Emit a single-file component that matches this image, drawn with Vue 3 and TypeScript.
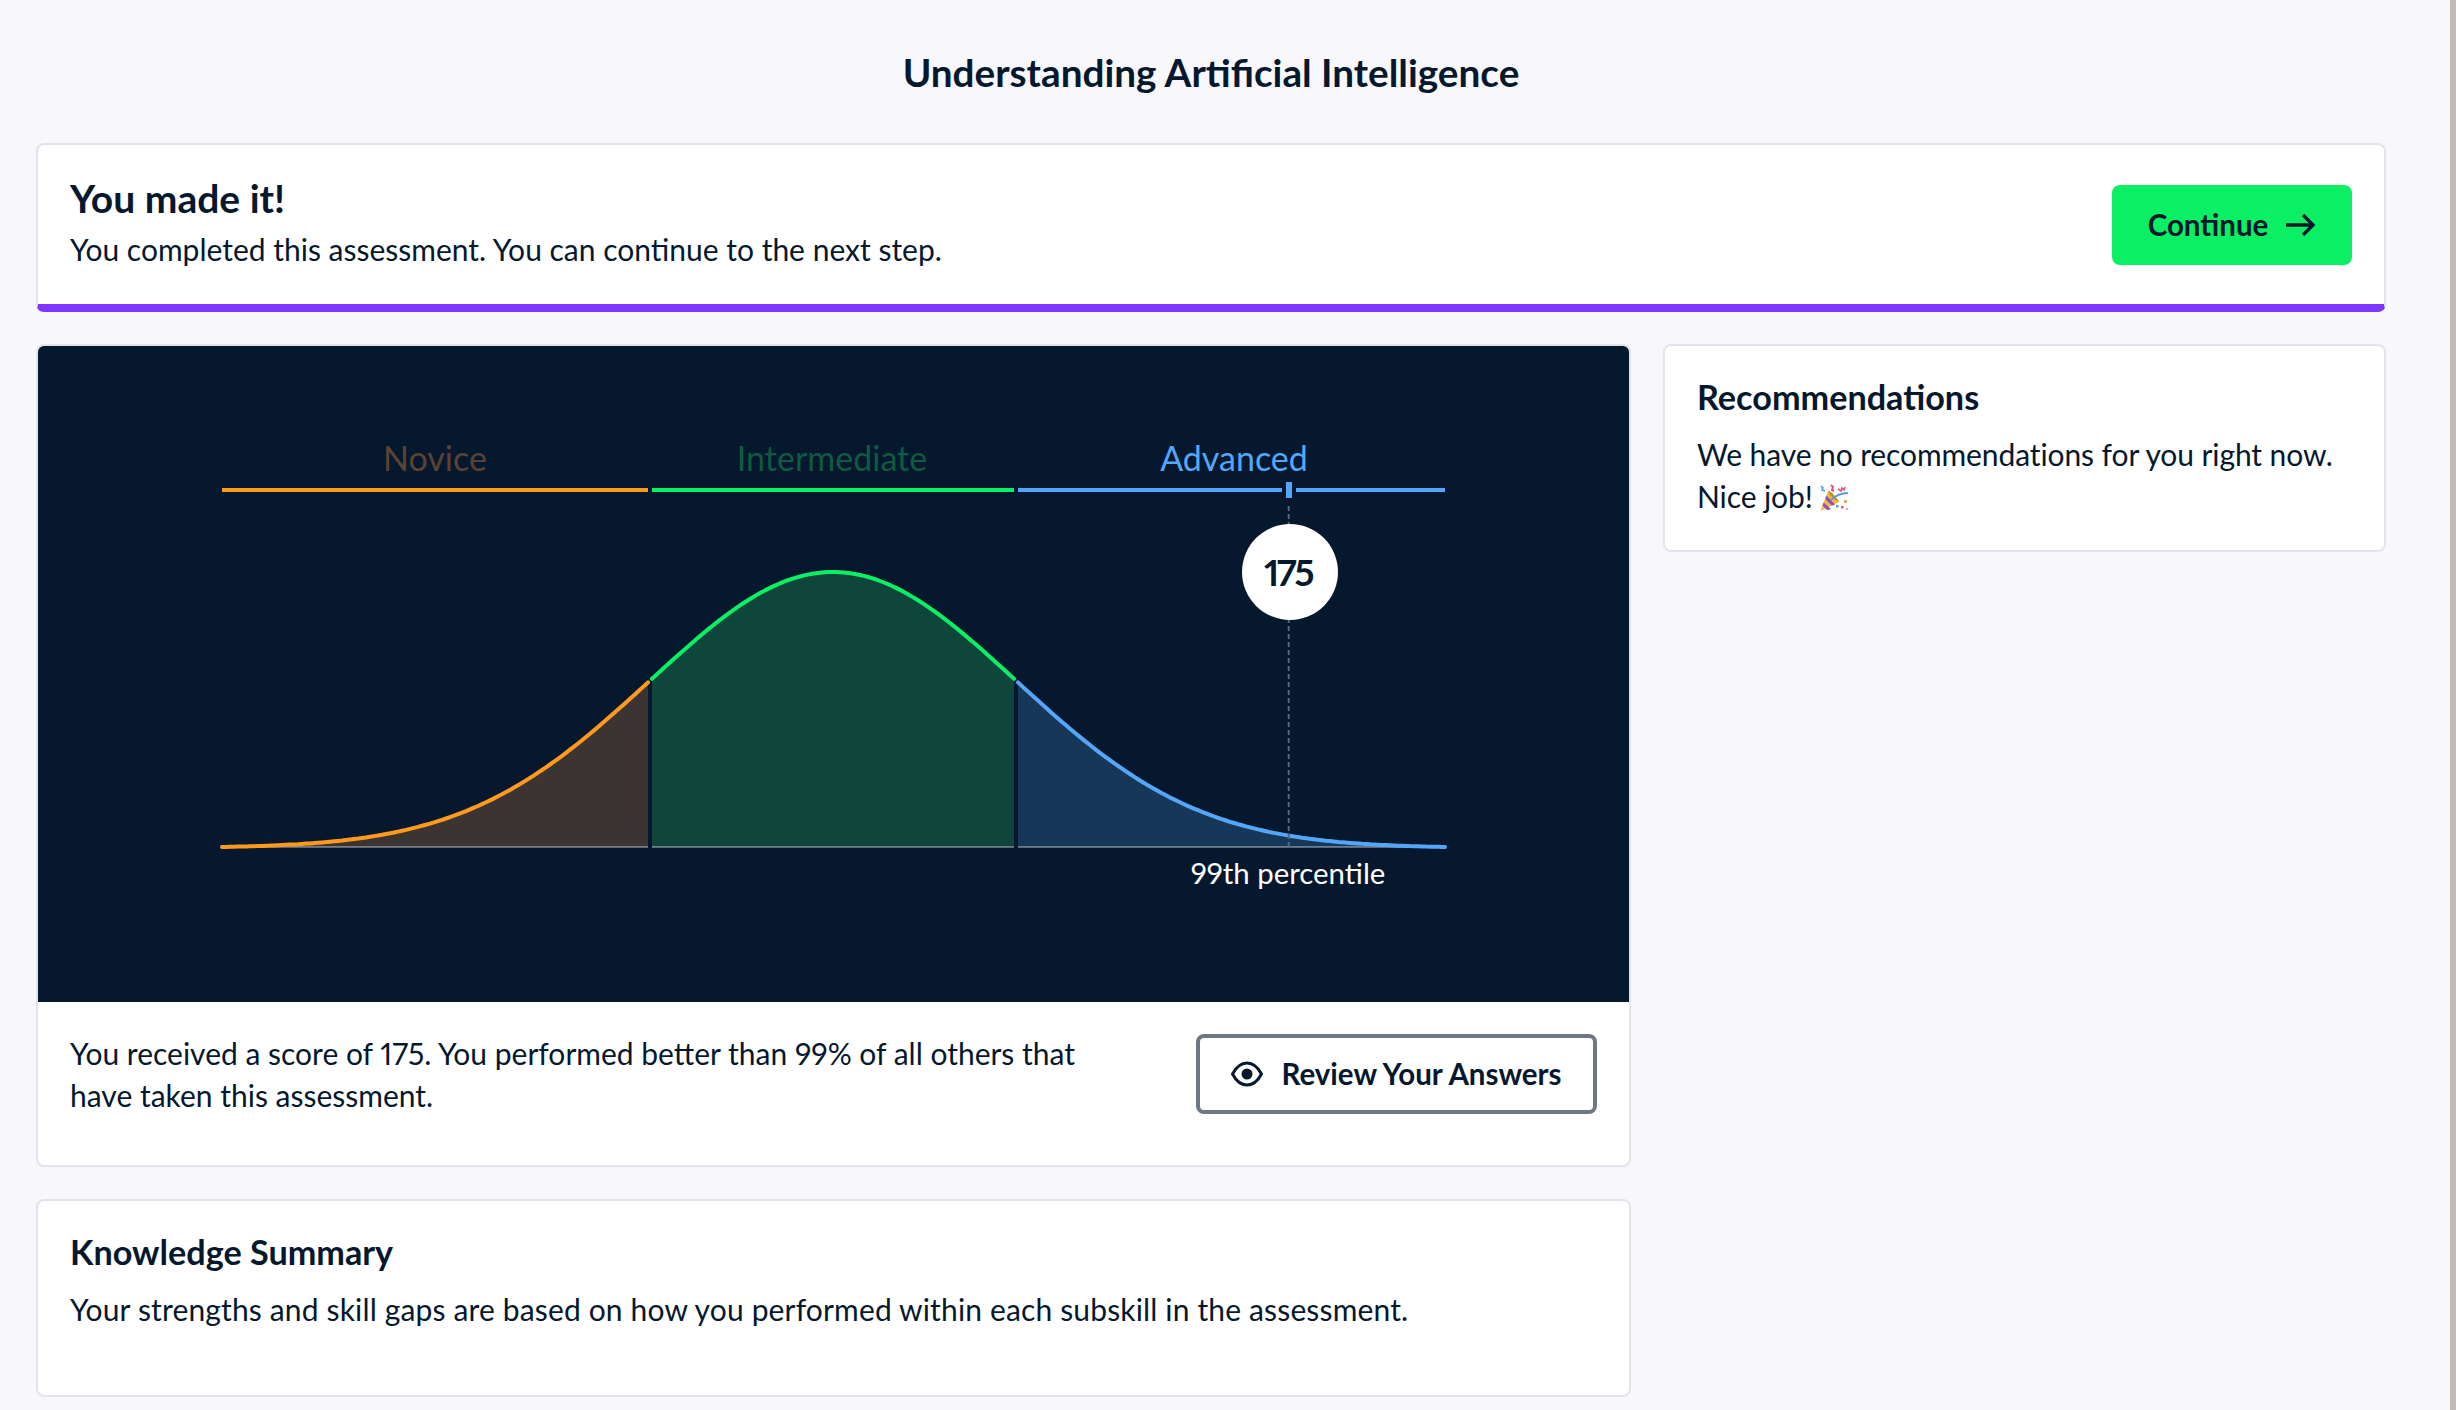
<script setup lang="ts">
interface Band {
  name: string
  from: number
  to: number
  line: string
  fill: string
  label: string
  labelX: number
}

const bands: Band[] = [
  { name: 'Novice', from: 222, to: 648, line: '#ff9a1f', fill: '#3c3333', label: '#5a4334', labelX: 435 },
  { name: 'Intermediate', from: 652, to: 1014, line: '#0aef63', fill: '#0e463b', label: '#0f5a40', labelX: 832 },
  { name: 'Advanced', from: 1018, to: 1445, line: '#54a7f8', fill: '#173759', label: '#54a7f8', labelX: 1234 }
]

const baseY = 848
const peak = 276

function curveY(x: number): number {
  const d = (x - 833) / 183
  return baseY - peak * Math.exp(-0.5 * d * d)
}

function curvePoints(b: Band): string {
  const pts: string[] = []
  for (let x = b.from; x < b.to; x += 4) pts.push(`${x},${curveY(x).toFixed(1)}`)
  pts.push(`${b.to},${curveY(b.to).toFixed(1)}`)
  return pts.join(' ')
}

function areaPoints(b: Band): string {
  return `${b.from},847 ${curvePoints(b)} ${b.to},847`
}
</script>

<template>
  <div class="page">
    <main class="content">
      <h1 class="title">Understanding Artificial Intelligence</h1>

      <section class="card alert">
        <div class="alert-text">
          <h2 class="alert-heading">You made it!</h2>
          <p>You completed this assessment. You can continue to the next step.</p>
        </div>
        <button class="btn-primary" type="button">
          Continue
          <svg width="32" height="32" viewBox="0 0 32 32" fill="none" stroke="currentColor" stroke-width="3.4">
            <path d="M2 16h27M19 6l10 10-10 10" />
          </svg>
        </button>
      </section>

      <div class="columns">
        <div class="left">
          <section class="card score">
            <svg class="chart" viewBox="38 346 1591 656" width="1591" height="656">
              <rect x="38" y="346" width="1591" height="656" fill="#06182d" />
              <g v-for="b in bands" :key="b.name">
                <text class="band-label" :x="b.labelX" y="471" :fill="b.label" text-anchor="middle">{{ b.name }}</text>
                <rect :x="b.from" y="488" :width="b.to - b.from" height="4" :fill="b.line" />
                <polygon :points="areaPoints(b)" :fill="b.fill" />
                <rect :x="b.from" y="846" :width="b.to - b.from" height="2" fill="#ffffff" opacity="0.35" />
                <polyline :points="curvePoints(b)" fill="none" :stroke="b.line" stroke-width="4" stroke-linecap="round" />
              </g>
              <rect x="1282" y="484" width="14" height="12" fill="#06182d" />
              <rect x="1286" y="482" width="6" height="16" fill="#54a7f8" />
              <line x1="1288.7" y1="506" x2="1288.7" y2="847" stroke="#56677c" stroke-width="2" stroke-dasharray="5 3" />
              <circle cx="1290" cy="572" r="48" fill="#ffffff" />
              <text class="score-value" x="1288" y="586" text-anchor="middle">175</text>
              <text class="percentile" x="1288" y="884" text-anchor="middle">99th percentile</text>
            </svg>
            <div class="score-body">
              <p class="score-text">You received a score of 175. You performed better than 99% of all others that have taken this assessment.</p>
              <button class="btn-outline" type="button">
                <svg width="32" height="26" viewBox="0 0 32 26" fill="none">
                  <path d="M1.500 13C5.500 5.500 10.500 2 16 2s10.500 3.500 14.500 11c-4 7.500-9 11-14.500 11S5.500 20.500 1.500 13Z" stroke="currentColor" stroke-width="3" />
                  <circle cx="16" cy="13" r="5.500" fill="currentColor" />
                </svg>
                Review Your Answers
              </button>
            </div>
          </section>

          <section class="card">
            <h2 class="card-heading">Knowledge Summary</h2>
            <p class="summary-text">Your strengths and skill gaps are based on how you performed within each subskill in the assessment.</p>
          </section>
        </div>

        <aside class="right">
          <section class="card">
            <h2 class="card-heading">Recommendations</h2>
            <p class="rec-text">We have no recommendations for you right now.<br />Nice job!
              <svg class="popper" width="30" height="28" viewBox="0 0 30 28">
                <path d="M.5 27 8 7l11 11Z" fill="#f4bb36" />
                <path d="M3.500 18.500 11 25l-3.500 1.300L2.500 21.500ZM6.500 11.500 15 20.500l-3 1.200-6.800-6.700Z" fill="#8d4fc4" />
                <path d="M8 7c2-1 8 5 11 11-3-1-9-6-11-11Z" fill="#c98a1e" />
                <path d="M11 16c4-4 10-7 17-7" stroke="#5c9be8" stroke-width="1.800" fill="none" />
                <path d="M1 2l2 2-1 2 3 1" stroke="#5c9be8" stroke-width="1.600" fill="none" />
                <path d="M11 1l2 2-1 3 2 1" stroke="#e4517f" stroke-width="2" fill="none" />
                <path d="M18 5l3 2 1-3 2 2 1-3" stroke="#e4517f" stroke-width="1.600" fill="none" />
                <rect x="24" y="16" width="3" height="3" fill="#f0a55a" />
                <rect x="21" y="22" width="2.500" height="2.500" fill="#e4517f" />
                <rect x="16" y="21" width="2.500" height="2.500" fill="#5c9be8" />
                <rect x="26" y="24" width="2" height="2" fill="#f2a0a0" />
              </svg>
            </p>
          </section>
        </aside>
      </div>
    </main>
    <div class="scrollbar"></div>
  </div>
</template>

<style>
html,
body {
  margin: 0;
  background: #f7f7fc;
}
</style>

<style scoped>
.page {
  display: flex;
  height: 1410px;
  overflow: hidden;
  background: #f7f7fc;
  color: #06182d;
  font-family: Lato, "Noto Sans", sans-serif;
  font-size: 30px;
  line-height: 42px;
  font-feature-settings: "pnum";
}

.content {
  flex: 1;
  min-width: 0;
  padding: 50px 64px 0 36px;
}

.scrollbar {
  width: 6px;
  flex-shrink: 0;
  background: #c4b8b8;
}

.title {
  margin: 0 0 49px;
  font-size: 38.7px;
  line-height: 44px;
  font-weight: 700;
  text-align: center;
}

.card {
  background: #fff;
  border: 2px solid #e3e3ec;
  border-radius: 8px;
  padding: 32px;
}

p {
  margin: 0;
}

.alert {
  display: flex;
  align-items: center;
  justify-content: space-between;
  border-bottom: 8px solid #7e36ff;
}

.alert-text {
  padding-bottom: 2px;
}

.alert-heading {
  margin: 0 0 9px;
  font-size: 39px;
  line-height: 42px;
  font-weight: 700;
}

.btn-primary,
.btn-outline {
  display: flex;
  align-items: center;
  justify-content: center;
  height: 80px;
  border-radius: 8px;
  font: inherit;
  font-size: 29.5px;
  font-weight: 700;
  color: #06182d;
}

.btn-primary {
  width: 240px;
  gap: 16px;
  border: none;
  background: #0aef63;
}

.columns {
  display: grid;
  grid-template-columns: 1595px 723px;
  gap: 32px;
  margin-top: 32px;
  align-items: start;
}

.left {
  display: flex;
  flex-direction: column;
  gap: 32px;
}

.score {
  padding: 0;
  overflow: hidden;
}

.chart {
  display: block;
}

.band-label {
  font-size: 34px;
}

.score-value {
  font-size: 37px;
  font-weight: 700;
  letter-spacing: -2.5px;
  fill: #06182d;
}

.percentile {
  font-size: 29.4px;
  fill: #fff;
}

.score-body {
  display: flex;
  justify-content: space-between;
  align-items: flex-start;
  padding: 32px 32px 51px;
}

.score-text {
  width: 1040px;
  margin: -2px 0 -2px;
}

.btn-outline {
  width: 401px;
  gap: 18px;
  background: #fff;
  border: 4px solid #6e7784;
}

.card-heading {
  margin: 0 0 17px;
  font-size: 34.2px;
  line-height: 38px;
  font-weight: 700;
}

.rec-text {
  padding-bottom: 1px;
  letter-spacing: -0.1px;
}

.summary-text {
  margin-bottom: 33px;
  letter-spacing: 0.15px;
}

.popper {
  vertical-align: -4px;
}
</style>
